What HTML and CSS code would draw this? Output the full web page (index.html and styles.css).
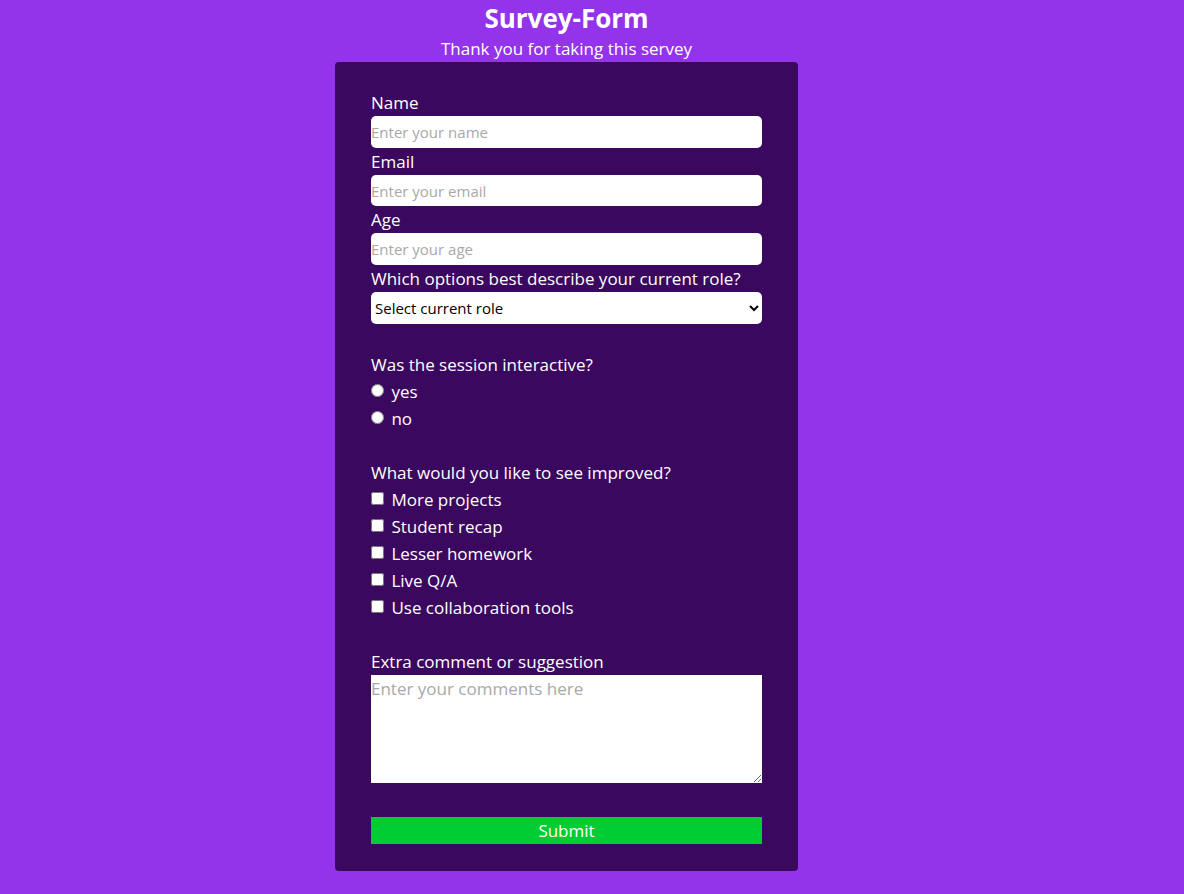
FILE: index.html
```html
<!DOCTYPE html>
<html lang="en">
<head>
<meta charset="utf-8">
<title>Survey-Form</title>
<link rel="stylesheet" href="styles.css">
</head>
<body>
<div class="page">
<header class="head">
  <h1 class="title">Survey-Form</h1>
  <p class="subtitle">Thank you for taking this servey</p>
</header>
<form class="card">
  <label class="label" for="name">Name</label>
  <input class="field" id="name" type="text" placeholder="Enter your name">
  <label class="label" for="email">Email</label>
  <input class="field" id="email" type="email" placeholder="Enter your email">
  <label class="label" for="age">Age</label>
  <input class="field" id="age" type="number" placeholder="Enter your age">
  <label class="label" for="role">Which options best describe your current role?</label>
  <select class="select" id="role">
    <option>Select current role</option>
    <option>Student</option>
    <option>Full time job</option>
    <option>Prefer not to say</option>
  </select>

  <div class="group">
    <p class="label">Was the session interactive?</p>
    <label class="opt"><input class="radio" type="radio" name="inter"> yes</label>
    <label class="opt"><input class="radio" type="radio" name="inter"> no</label>
  </div>

  <div class="group">
    <p class="label">What would you like to see improved?</p>
    <label class="opt"><input class="check" type="checkbox"> More projects</label>
    <label class="opt"><input class="check" type="checkbox"> Student recap</label>
    <label class="opt"><input class="check" type="checkbox"> Lesser homework</label>
    <label class="opt"><input class="check" type="checkbox"> Live Q/A</label>
    <label class="opt"><input class="check" type="checkbox"> Use collaboration tools</label>
  </div>

  <div class="group">
    <label class="label" for="comments">Extra comment or suggestion</label>
    <textarea class="area" id="comments" placeholder="Enter your comments here"></textarea>
  </div>

  <button class="submit" type="submit">Submit</button>
</form>
</div>
</body>
</html>
```
FILE: styles.css
```css
* { box-sizing: border-box; }
html, body {
  margin: 0;
  padding: 0;
}
body {
  background: #9333ea;
  color: #ffffff;
  font-family: "Open Sans", "Noto Sans", "Liberation Sans", sans-serif;
  font-size: 17px;
  min-height: 894px;
}
.page {
  width: 1133px;
}
.head {
  text-align: center;
}
.title {
  margin: 0;
  font-size: 26px;
  line-height: 37px;
  font-weight: 700;
}
.subtitle {
  margin: 0;
  font-size: 17px;
  line-height: 24px;
}
.card {
  width: 463px;
  margin: 1px auto 0;
  background: #3b0860;
  border-radius: 4px;
  padding: 27px 36px 27px;
  display: flex;
  flex-direction: column;
}
.label {
  display: block;
  margin: 0;
  line-height: 27px;
  font-size: 17px;
}
.field {
  display: block;
  width: 100%;
  height: 31.7px;
  border: none;
  border-radius: 5px;
  padding: 0;
  font-family: inherit;
  font-size: 15px;
  background: #fff;
  color: #000;
  outline: none;
}
.field::placeholder { color: #a9a9a9; }
.select {
  display: block;
  width: 100%;
  height: 32px;
  border: none;
  border-radius: 5px;
  padding: 0;
  font-family: inherit;
  font-size: 15px;
  background: #fff;
  color: #000;
}
.group {
  margin-top: 27px;
  display: flex;
  flex-direction: column;
}
.opt {
  display: block;
  line-height: 27px;
  font-size: 17px;
}
.radio, .check {
  margin: 0 3px 0 0;
  width: 13px;
  height: 13px;
  vertical-align: 1px;
}
.area {
  display: block;
  width: 100%;
  height: 108px;
  border: none;
  border-radius: 0;
  padding: 2px 0 0;
  font-family: inherit;
  font-size: 17px;
  resize: both;
  background: #fff;
}
.area::placeholder { color: #a9a9a9; }
.submit {
  margin-top: 34px;
  width: 100%;
  height: 27px;
  border: none;
  border-radius: 0;
  padding: 0;
  background: #00cc33;
  color: #fff;
  font-family: inherit;
  font-size: 17px;
}
```
